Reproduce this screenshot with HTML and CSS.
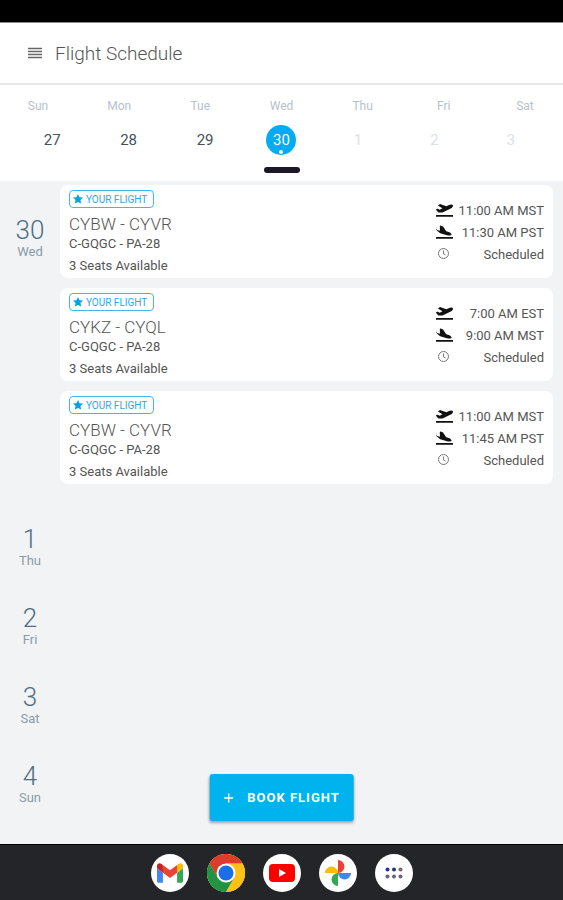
FILE: index.html
```
<!DOCTYPE html>
<html lang="en">
  <head>
    <meta charset="UTF-8" />
    <meta name="viewport" content="width=device-width, initial-scale=1.0" />
    <title>Flight Schedule</title>
    <link rel="stylesheet" href="styles.css">
  </head>
  <body>
    <svg class="sprite" aria-hidden="true">
      <symbol id="takeoff" viewBox="0 0 640 512">
        <path d="M0 448h640v64H0zM80.550 341.270c6.280 6.840 15.100 10.720 24.330 10.710l130.540-.18a65.620 65.620 0 0 0 29.640-7.120l290.960-147.650c26.740-13.570 50.710-32.940 67.020-58.310 18.310-28.480 20.300-49.090 13.070-63.650-7.210-14.570-24.740-25.270-58.250-27.450-29.850-1.940-59.540 5.920-86.280 19.480l-98.510 49.990-218.700-82.060a17.799 17.799 0 0 0-18-1.110L90.620 67.290c-10.670 5.410-13.250 19.650-5.170 28.530l156.220 98.100-103.210 52.380-72.350-36.470a17.804 17.804 0 0 0-16.070.02L9.910 230.220c-10.440 5.300-13.190 19.120-5.570 28.080z" />
      </symbol>
      <symbol id="landing" viewBox="0 0 640 512">
        <path d="M0 448h640v64H0zM44.810 205.660l88.740 80a62.607 62.607 0 0 0 25.470 14.500l287.410 83.030c26.730 7.720 55.110 11.210 83.790 6.440 33.100-5.500 48.260-18.620 53.080-33.810 4.840-15.190-1.930-33.970-26.280-57.070-21.150-20.080-47.150-33.250-74.340-41.110l-98.510-28.460-119.080-180.940c-1.810-6.200-6.690-11.030-12.900-12.750l-84.420-24.420c-11.800-3.410-23.480 5.330-23.430 17.510l2.800 181.680-103.610-29.930-37.610-75.400a17.820 17.820 0 0 0-11.680-9.140L37.350 80.350C25.530 77.480 14.150 86.350 14.190 98.480l.36 71.120a49.200 49.200 0 0 0 30.260 36.060z" />
      </symbol>
      <symbol id="clock" viewBox="0 0 17 14">
        <path d="M7.500 1.500a5 5 0 1 0 0 10a5 5 0 1 0 0-10M7.500 3.500v3.400l2 1" fill="none" stroke="#777" />
      </symbol>
      <symbol id="star" viewBox="0 0 24 24">
        <path d="M12 0l3.600 7.500 8.400 1-6.200 5.700 1.800 8.800-7.600-3.600-7.600 3.600 1.800-8.800L0 8.500l8.400-1z" />
      </symbol>
    </svg>

    <div class="status-bar"></div>

    <header>
      <button type="button" class="menu" aria-label="Menu">
        <svg width="16" height="12" viewBox="0 0 16 12">
          <path d="M1 1.500h14M1 4.500h14M1 7.500h14M1 10.500h14" stroke="#666" stroke-width="1.300" />
        </svg>
      </button>
      <h1>Flight Schedule</h1>
    </header>

    <section class="week">
      <div class="weekdays">
        <span>Sun</span>
        <span>Mon</span>
        <span>Tue</span>
        <span>Wed</span>
        <span>Thu</span>
        <span>Fri</span>
        <span>Sat</span>
      </div>
      <div class="dates">
        <button type="button">27</button>
        <button type="button">28</button>
        <button type="button">29</button>
        <button type="button" class="selected">30</button>
        <button type="button" class="next-month">1</button>
        <button type="button" class="next-month">2</button>
        <button type="button" class="next-month">3</button>
      </div>
      <div class="knob"></div>
    </section>

    <main>
      <section class="day">
        <h2>30 <small>Wed</small></h2>
        <div class="flights">
          <article>
            <div class="info">
              <span class="badge"><svg><use href="#star" /></svg>YOUR FLIGHT</span>
              <h3>CYBW - CYVR</h3>
              <p class="plane">C-GQGC - PA-28</p>
              <p class="seats">3 Seats Available</p>
            </div>
            <ul>
              <li><svg><use href="#takeoff" /></svg>11:00 AM MST</li>
              <li><svg><use href="#landing" /></svg>11:30 AM PST</li>
              <li><svg><use href="#clock" /></svg>Scheduled</li>
            </ul>
          </article>
          <article>
            <div class="info">
              <span class="badge"><svg><use href="#star" /></svg>YOUR FLIGHT</span>
              <h3>CYKZ - CYQL</h3>
              <p class="plane">C-GQGC - PA-28</p>
              <p class="seats">3 Seats Available</p>
            </div>
            <ul>
              <li><svg><use href="#takeoff" /></svg>7:00 AM EST</li>
              <li><svg><use href="#landing" /></svg>9:00 AM MST</li>
              <li><svg><use href="#clock" /></svg>Scheduled</li>
            </ul>
          </article>
          <article>
            <div class="info">
              <span class="badge"><svg><use href="#star" /></svg>YOUR FLIGHT</span>
              <h3>CYBW - CYVR</h3>
              <p class="plane">C-GQGC - PA-28</p>
              <p class="seats">3 Seats Available</p>
            </div>
            <ul>
              <li><svg><use href="#takeoff" /></svg>11:00 AM MST</li>
              <li><svg><use href="#landing" /></svg>11:45 AM PST</li>
              <li><svg><use href="#clock" /></svg>Scheduled</li>
            </ul>
          </article>
        </div>
      </section>
      <section class="day">
        <h2>1 <small>Thu</small></h2>
      </section>
      <section class="day">
        <h2>2 <small>Fri</small></h2>
      </section>
      <section class="day">
        <h2>3 <small>Sat</small></h2>
      </section>
      <section class="day">
        <h2>4 <small>Sun</small></h2>
      </section>

      <button type="button" class="book">
        <svg width="10" height="10" viewBox="0 0 10 10">
          <path d="M5 .5v9M.5 5h9" stroke="#fff" stroke-width="1.400" />
        </svg>
        BOOK FLIGHT
      </button>
    </main>

    <nav>
      <a href="#" aria-label="Gmail">
        <svg width="26" height="20" viewBox="52 42 88 66">
          <path fill="#4285f4" d="M58 108h14V74L52 59v43c0 3.320 2.690 6 6 6" />
          <path fill="#34a853" d="M120 108h14c3.320 0 6-2.690 6-6V59l-20 15" />
          <path fill="#fbbc04" d="M120 48v26l20-15v-8c0-7.420-8.470-11.650-14.400-7.200" />
          <path fill="#ea4335" d="M72 74V48l24 18 24-18v26L96 92" />
          <path fill="#c5221f" d="M52 51v8l20 15V48l-5.600-4.200c-5.940-4.450-14.400-.22-14.400 7.200" />
        </svg>
      </a>
      <a href="#" aria-label="Chrome">
        <svg width="38" height="38" viewBox="0 0 48 48">
          <circle cx="24" cy="24" r="24" fill="#fbc116" />
          <path fill="#dd3b2b" d="M3.200 12A24 24 0 0 1 44.800 12H24L13.600 30z" />
          <path fill="#229342" d="M3.200 12A24 24 0 0 0 24 48L34.400 30H13.600z" />
          <path fill="#fbc116" d="M24 12h20.800A24 24 0 0 1 24 48l10.400-18z" />
          <circle cx="24" cy="24" r="12" fill="#fff" />
          <circle cx="24" cy="24" r="9.500" fill="#1a6fe8" />
        </svg>
      </a>
      <a href="#" aria-label="YouTube">
        <svg width="26" height="18" viewBox="0 0 26 18">
          <rect width="26" height="18" rx="4" fill="#f00" />
          <path fill="#fff" d="M10 5v8l7-4z" />
        </svg>
      </a>
      <a href="#" aria-label="Photos">
        <svg width="28" height="28" viewBox="0 0 28 28">
          <path fill="#ea4335" d="M14 1a6.500 6.500 0 0 1 0 13z" />
          <path fill="#4285f4" d="M27 14a6.500 6.500 0 0 1-13 0z" />
          <path fill="#34a853" d="M14 27a6.500 6.500 0 0 1 0-13z" />
          <path fill="#fbbc04" d="M1 14a6.500 6.500 0 0 1 13 0z" />
        </svg>
      </a>
      <a href="#" aria-label="All apps">
        <svg width="18" height="12" viewBox="0 0 18 12">
          <g fill="#26338a">
            <circle cx="2.500" cy="2.500" r="2" />
            <circle cx="9" cy="2.500" r="2" />
          </g>
          <circle cx="15.500" cy="2.500" r="2" fill="#84606f" />
          <g fill="#666480">
            <circle cx="2.500" cy="9.500" r="2" />
            <circle cx="9" cy="9.500" r="2" />
            <circle cx="15.500" cy="9.500" r="2" />
          </g>
        </svg>
      </a>
    </nav>
  </body>
</html>
```

FILE: styles.css
```
* {
  box-sizing: border-box;
  margin: 0;
  padding: 0;
}
body {
  display: flex;
  flex-direction: column;
  height: 100vh;
  font-family: Roboto, sans-serif;
  font-size: 13px;
  color: #555;
  background-color: #f1f3f5;
}
button {
  border: none;
  background: none;
  font-family: inherit;
  cursor: pointer;
}
.sprite {
  display: none;
}
.status-bar {
  flex: none;
  height: 23px;
  background-color: #000;
  border-bottom: 1px solid #888;
}
header {
  flex: none;
  display: flex;
  align-items: center;
  gap: 12px;
  height: 62px;
  padding: 0 27px;
  background-color: #fff;
  border-bottom: 2px solid #e8e8e8;
}
.menu svg {
  display: block;
}
h1 {
  font-size: 19px;
  font-weight: 300;
}
.week {
  flex: none;
  padding-top: 12px;
  height: 96px;
  background-color: #fff;
}
.weekdays {
  display: flex;
  justify-content: space-between;
  padding: 0 28px;
  font-size: 12px;
  line-height: 18px;
  color: #b6c1cd;
}
.weekdays span {
  display: flex;
  justify-content: center;
  width: 20px;
}
.dates {
  display: grid;
  grid-template-columns: repeat(7, 1fr);
  justify-items: center;
  padding: 0 14px;
  margin-top: 10px;
}
.dates button {
  width: 30px;
  height: 30px;
  border-radius: 50%;
  font-size: 15px;
  color: #43515c;
}
.dates .next-month {
  color: #d9e1e8;
}
.dates .selected {
  position: relative;
  background-color: #00adf0;
  color: #fff;
}
.selected::after {
  content: "";
  position: absolute;
  left: 13px;
  bottom: 1px;
  width: 4px;
  height: 4px;
  border-radius: 50%;
  background-color: #fff;
}
.knob {
  width: 36px;
  height: 6px;
  margin: 12px auto 0;
  border-radius: 3px;
  background-color: #1c1826;
}
main {
  position: relative;
  flex: 1;
  min-height: 0;
  overflow: hidden;
}
.day {
  display: flex;
  min-height: 79px;
}
h2 {
  flex: none;
  width: 60px;
  padding-top: 35px;
  text-align: center;
  font-size: 26px;
  line-height: 28px;
  font-weight: 300;
  color: #4f6f85;
}
h2 small {
  display: block;
  font-size: 13px;
  line-height: 16px;
  font-weight: 400;
  color: #8a9ba8;
}
.flights {
  flex: 1;
  display: flex;
  flex-direction: column;
  gap: 10px;
  padding: 4px 10px 6px 0;
}
article {
  display: flex;
  justify-content: space-between;
  height: 93px;
  padding: 5px 9px;
  border-radius: 8px;
  background-color: #fff;
}
.badge {
  display: flex;
  align-items: center;
  gap: 3px;
  width: 85px;
  height: 18px;
  padding-left: 3px;
  border: 1px solid #45b4ec;
  border-radius: 4px;
  font-size: 10px;
  color: #2ba8ec;
}
.badge svg {
  width: 10px;
  height: 10px;
  fill: #00a2e8;
}
h3 {
  margin-top: 5px;
  font-size: 17px;
  line-height: 22px;
  font-weight: 300;
}
.plane,
.seats {
  font-size: 13px;
  line-height: 18px;
}
.seats {
  margin-top: 4px;
}
ul {
  width: 108px;
  padding-top: 9px;
  list-style: none;
}
li {
  display: flex;
  justify-content: space-between;
  align-items: center;
  height: 22px;
  white-space: nowrap;
}
li svg {
  flex: none;
  width: 17px;
  height: 14px;
  fill: #111;
}
.book {
  position: absolute;
  bottom: 23px;
  left: 50%;
  transform: translateX(-50%);
  display: flex;
  align-items: center;
  gap: 14px;
  height: 47px;
  padding: 0 14px;
  border-radius: 3px;
  background-color: #00b2ee;
  box-shadow: 0 2px 3px #0005;
  font-size: 13px;
  font-weight: 700;
  letter-spacing: 1px;
  white-space: nowrap;
  color: #fff;
}
nav {
  flex: none;
  display: flex;
  justify-content: center;
  align-items: center;
  gap: 18px;
  height: 56px;
  background-color: #242528;
  border-top: 1px solid #000;
}
nav a {
  display: flex;
  justify-content: center;
  align-items: center;
  width: 38px;
  height: 38px;
  border-radius: 50%;
  background-color: #fff;
}
```
